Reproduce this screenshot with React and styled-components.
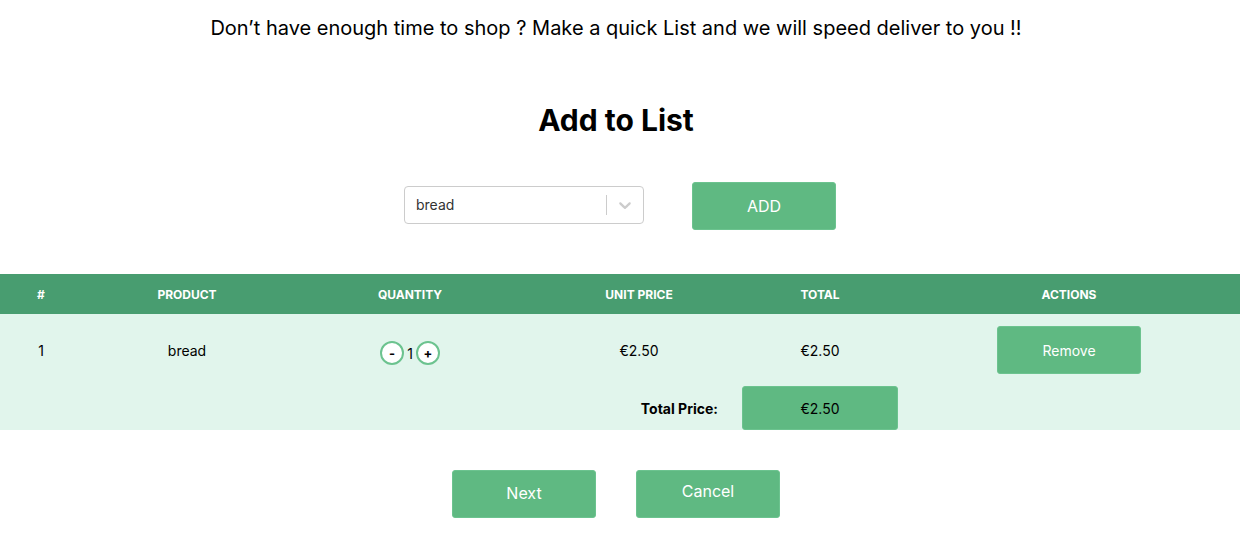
import React, { useState } from "react";
import styled, { createGlobalStyle } from "styled-components";

const GlobalStyle = createGlobalStyle`
  body {
    margin: 0;
    background: #ffffff;
    font-family: Inter, "Noto Sans", Arial, sans-serif;
    color: #000000;
  }
`;

const Page = styled.div`
  width: 1240px;
  display: flex;
  flex-direction: column;
  align-items: center;
`;

const Intro = styled.p`
  margin: 16px 8px 0 0;
  font-size: 20px;
  line-height: 24px;
  text-align: center;
`;

const Title = styled.h1`
  margin: 63px 8px 0 0;
  font-size: 30px;
  line-height: 34px;
  font-weight: 700;
`;

const Controls = styled.div`
  margin-top: 45px;
  display: flex;
  align-items: center;
  gap: 48px;
`;

const Select = styled.div`
  width: 240px;
  height: 38px;
  box-sizing: border-box;
  border: 1px solid #cccccc;
  border-radius: 4px;
  display: flex;
  align-items: center;
  background: #fff;
  margin-bottom: 2px;
`;

const SelectValue = styled.div`
  flex: 1;
  padding-left: 11px;
  font-size: 14px;
  color: #333333;
  margin-bottom: 2px;
`;

const Separator = styled.span`
  width: 1px;
  height: 20px;
  background: #cccccc;
`;

const Indicator = styled.div`
  width: 36px;
  display: flex;
  justify-content: center;
  align-items: center;
  color: #cccccc;
`;

const GreenButton = styled.button`
  flex-shrink: 0;
  width: ${(p) => p.$w || 144}px;
  height: ${(p) => p.$h || 48}px;
  background: #5fb982;
  border: 1px solid #6cc38f;
  border-radius: 3px;
  color: ${(p) => p.$color || "#ffffff"};
  font-family: Inter, "Noto Sans", Arial, sans-serif;
  font-size: ${(p) => p.$size || 16}px;
  padding: ${(p) => p.$pad || "0"};
  cursor: pointer;
`;

const Table = styled.table`
  margin-top: 44px;
  width: 1240px;
  border-collapse: collapse;
  table-layout: fixed;
`;

const HeadRow = styled.tr`
  background: #489d70;
  height: 40px;
`;

const Th = styled.th`
  color: #ffffff;
  font-size: 12px;
  font-weight: 700;
  text-transform: uppercase;
  text-align: center;
  padding: ${(p) => p.$pad || "0"};
`;

const Body = styled.tbody`
  background: #e1f5ec;
`;

const Row = styled.tr`
  height: ${(p) => p.$h}px;
`;

const Td = styled.td`
  text-align: ${(p) => p.$align || "center"};
  font-size: 14px;
  color: #000;
  padding: ${(p) => p.$pad || "0"};
  font-weight: ${(p) => (p.$bold ? 700 : 400)};
  vertical-align: middle;
`;

const Qty = styled.div`
  display: inline-flex;
  align-items: center;
  gap: 3px;
  margin-top: 6px;
  font-size: 14px;
`;

const Round = styled.button`
  width: 24px;
  height: 24px;
  border-radius: 50%;
  border: 2px solid #6cc38f;
  background: #ffffff;
  font-family: Inter, Arial, sans-serif;
  font-size: 13px;
  font-weight: 700;
  padding: 0;
  line-height: 18px;
  color: #000;
`;

const Center = styled.div`
  display: flex;
  justify-content: center;
  align-items: center;
  height: 100%;
`;

const Footer = styled.div`
  margin-top: 40px;
  display: flex;
  gap: 40px;
  margin-right: 8px;
`;

export default function App() {
  const [qty, setQty] = useState(1);
  const total = (2.5 * qty).toFixed(2);
  return (
    <>
      <GlobalStyle />
      <Page>
        <Intro>
          Don’t have enough time to shop ? Make a quick List and we will speed
          deliver to you !!
        </Intro>
        <Title>Add to List</Title>
        <Controls>
          <Select>
            <SelectValue>bread</SelectValue>
            <Separator />
            <Indicator>
              <svg width="20" height="20" viewBox="0 0 20 20" fill="currentColor">
                <path d="M4.516 7.548c0.436-0.446 1.043-0.481 1.576 0l3.908 3.747 3.908-3.747c0.533-0.481 1.141-0.446 1.574 0 0.436 0.445 0.408 1.197 0 1.615-0.406 0.418-4.695 4.502-4.695 4.502-0.217 0.223-0.502 0.335-0.787 0.335s-0.57-0.112-0.789-0.335c0 0-4.287-4.084-4.695-4.502s-0.436-1.17 0-1.615z" />
              </svg>
            </Indicator>
          </Select>
          <GreenButton>ADD</GreenButton>
        </Controls>
        <Table>
          <colgroup>
            <col style={{ width: 82 }} />
            <col style={{ width: 210 }} />
            <col style={{ width: 236 }} />
            <col style={{ width: 222 }} />
            <col style={{ width: 140 }} />
            <col style={{ width: 350 }} />
          </colgroup>
          <thead>
            <HeadRow>
              <Th>#</Th>
              <Th>Product</Th>
              <Th>Quantity</Th>
              <Th>Unit Price</Th>
              <Th>Total</Th>
              <Th $pad="0 0 0 8px">Actions</Th>
            </HeadRow>
          </thead>
          <Body>
            <Row $h={72}>
              <Td>1</Td>
              <Td>bread</Td>
              <Td>
                <Qty>
                  <Round onClick={() => setQty(Math.max(1, qty - 1))}>-</Round>
                  {qty}
                  <Round onClick={() => setQty(qty + 1)}>+</Round>
                </Qty>
              </Td>
              <Td>€2.50</Td>
              <Td>€{total}</Td>
              <Td $pad="0 0 0 8px">
                <Center>
                  <GreenButton $size={14}>Remove</GreenButton>
                </Center>
              </Td>
            </Row>
            <Row $h={44}>
              <Td colSpan={3} />
              <Td $align="right" $pad="0 32px 0 0" $bold>
                Total Price:
              </Td>
              <Td>
                <Center>
                  <GreenButton $w={156} $h={44} $size={14} $color="#000">
                    €{total}
                  </GreenButton>
                </Center>
              </Td>
              <Td />
            </Row>
          </Body>
        </Table>
        <Footer>
          <GreenButton $pad="0 0 2px 0">Next</GreenButton>
          <GreenButton $pad="0 0 6px 0">Cancel</GreenButton>
        </Footer>
      </Page>
    </>
  );
}
